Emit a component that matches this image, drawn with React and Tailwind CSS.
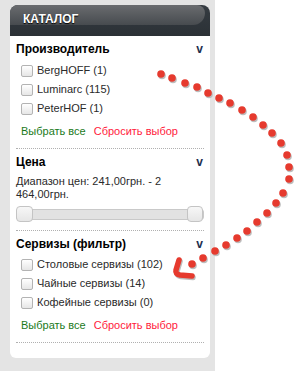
import React from "react";

const dots = [
  [161, 74], [172, 78], [185, 83], [197, 87], [208, 93], [219, 98], [230, 103],
  [242, 110], [253, 117], [263, 125], [272, 133], [281, 143], [287, 155], [289, 167],
  [289, 179], [283, 193], [276, 203], [267, 213], [257, 222], [247, 231], [237, 238],
  [226, 245], [215, 251], [203, 258], [192, 264],
];

function Checkbox() {
  return (
    <span className="w-[12px] h-[12px] shrink-0 rounded-[2px] border border-[#b3b3b3] bg-gradient-to-b from-[#ffffff] to-[#e6e6e6]" />
  );
}

function Row({ label }) {
  return (
    <div className="h-[19px] flex items-center pl-[5px] gap-[4px]">
      <Checkbox />
      <span className="text-[11px] leading-[13px] text-[#2a2a2a]">{label}</span>
    </div>
  );
}

function Heading({ title }) {
  return (
    <div className="h-[16px] flex items-center justify-between">
      <span className="text-[12px] font-bold leading-[14px] text-black">{title}</span>
      <span className="text-[12px] font-bold leading-[14px] text-[#1d2f4e] pr-[1px]">v</span>
    </div>
  );
}

function Links() {
  return (
    <div className="h-[16px] flex items-center pl-[5px] text-[11px] leading-[13px]">
      <span className="text-[#1b7a1b]">Выбрать все</span>
      <span className="ml-[8px] text-[#ff1a3c]">Сбросить выбор</span>
    </div>
  );
}

function Divider({ mt }) {
  return <div className={`${mt} border-b border-dotted border-[#b0b0b0]`} />;
}

export default function App() {
  return (
    <div
      className="relative flex w-[297px] h-[371px] bg-white overflow-hidden"
      style={{ fontFamily: '"Liberation Sans", Arial, sans-serif' }}
    >
      <div className="w-[215px] h-full bg-[#e4e4e4] pt-[5px] pl-[10px] pr-[5px]">
        <div className="w-[200px]">
          <div className="h-[31px] bg-gradient-to-b from-[#353b41] to-[#2b3136] rounded-t-[8px] flex flex-col">
            <div className="h-[20px] mr-[5px] rounded-tl-[8px] rounded-tr-[8px] rounded-br-[12px] bg-gradient-to-b from-[#6a6c6f] to-[#474b4f] pl-[13px]">
              <div
                className="mt-[8px] text-[12px] leading-[13px] font-bold text-white uppercase"
                style={{ textShadow: "0 1px 1px #000" }}
              >
                Каталог
              </div>
            </div>
          </div>
          <div className="bg-white rounded-b-[6px] px-[6px] pb-[15px]">
            <div className="pt-[5px]">
              <Heading title="Производитель" />
              <div className="mt-[4px]">
                <Row label="BergHOFF (1)" />
                <Row label="Luminarc (115)" />
                <Row label="PeterHOF (1)" />
              </div>
              <div className="mt-[5px]">
                <Links />
              </div>
              <Divider mt="mt-[9px]" />
            </div>
            <div className="pt-[5px]">
              <Heading title="Цена" />
              <div className="mt-[5px] text-[11px] leading-[13px] text-[#2a2a2a]">
                Диапазон цен: 241,00грн. - 2 464,00грн.
              </div>
              <div className="mt-[5px] h-[16px] relative flex items-center">
                <div className="w-full h-[11px] rounded-[3px] bg-[#e2e2e2] border border-[#c9c9c9]" />
                <div className="absolute left-0 top-0 w-[17px] h-[16px] rounded-[4px] bg-gradient-to-b from-[#f7f7f7] to-[#e6e6e6] border border-[#c4c4c4]" />
                <div className="absolute right-[1px] top-0 w-[16px] h-[16px] rounded-[4px] bg-gradient-to-b from-[#f7f7f7] to-[#e6e6e6] border border-[#c4c4c4]" />
              </div>
              <Divider mt="mt-[8px]" />
            </div>
            <div className="pt-[5px]">
              <Heading title="Сервизы (фильтр)" />
              <div className="mt-[3px]">
                <Row label="Столовые сервизы (102)" />
                <Row label="Чайные сервизы (14)" />
                <Row label="Кофейные сервизы (0)" />
              </div>
              <div className="mt-[5px]">
                <Links />
              </div>
              <Divider mt="mt-[9px]" />
            </div>
          </div>
        </div>
      </div>
      <svg
        className="absolute left-0 top-0 pointer-events-none"
        width="297"
        height="371"
        viewBox="0 0 297 371"
      >
        {dots.map(([x, y], i) => (
          <circle key={"s" + i} cx={x + 1} cy={y + 1.5} r="3.8" fill="#bdbdbd" />
        ))}
        {dots.map(([x, y], i) => (
          <circle key={"d" + i} cx={x} cy={y} r="3.8" fill="#e63a2e" />
        ))}
        <path
          d="M179,260 L176,270 Q175,274 180,275 L192,276"
          fill="none"
          stroke="#bdbdbd"
          strokeWidth="5.5"
          strokeLinecap="round"
          strokeLinejoin="round"
          transform="translate(1,1.5)"
        />
        <path
          d="M179,260 L176,270 Q175,274 180,275 L192,276"
          fill="none"
          stroke="#e63a2e"
          strokeWidth="5.5"
          strokeLinecap="round"
          strokeLinejoin="round"
        />
      </svg>
    </div>
  );
}
